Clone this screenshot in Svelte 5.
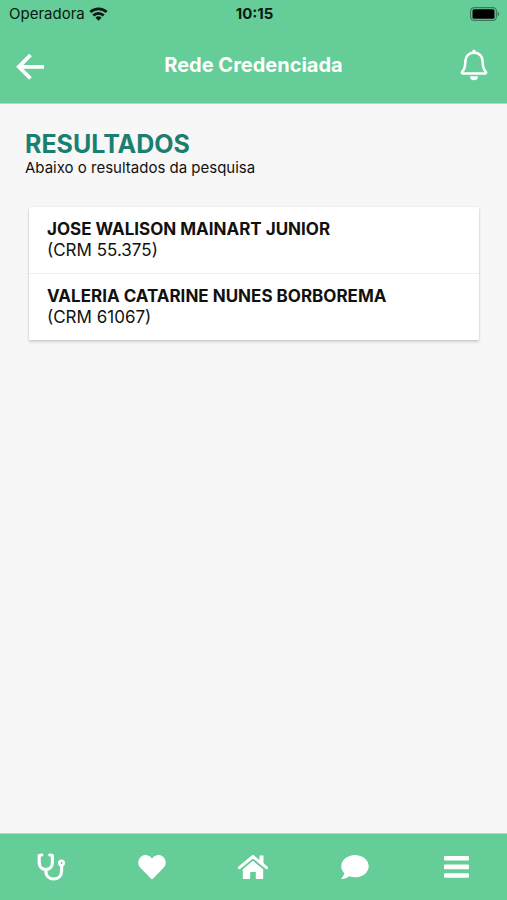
<script>
  const results = [
    { name: 'JOSE WALISON MAINART JUNIOR', crm: '55.375' },
    { name: 'VALERIA CATARINE NUNES BORBOREMA', crm: '61067' }
  ];
</script>

<div class="app">
  <header>
    <div class="status">
      <div class="carrier">
        <span>Operadora</span>
        <svg width="19" height="14" viewBox="0 0 20 14" aria-hidden="true">
          <g fill="none" stroke="#0a1a12" stroke-width="2.9">
            <path d="M1.4 5a12.3 12.3 0 0 1 17.2 0" />
            <path d="M4.5 8.500a7.800 7.800 0 0 1 11 0" />
          </g>
          <path d="M6.800 10.900a4.600 4.600 0 0 1 6.400 0L10 14z" fill="#0a1a12" />
        </svg>
      </div>
      <time>10:15</time>
      <svg class="battery" width="30" height="14" viewBox="0 0 30 14" aria-hidden="true">
        <rect x=".6" y=".6" width="25.8" height="12.8" rx="3.6" fill="none" stroke="#3c7b58" stroke-width="1.2" />
        <rect x="2.5" y="2.2" width="22" height="9.6" rx="1.6" fill="#000" />
        <path d="M27.600 4.600c2.200.8 2.200 4 0 4.800z" fill="#3c7b58" />
      </svg>
    </div>
    <div class="bar">
      <button aria-label="Voltar">
        <svg width="30" height="32" viewBox="0 0 30 32">
          <path d="M14.500 6 2.800 17.800l11.700 11.700M2.800 17.800H28" fill="none" stroke="#fff" stroke-width="3.8" />
        </svg>
      </button>
      <h1>Rede Credenciada</h1>
      <button aria-label="Notificações">
        <svg width="28" height="32" viewBox="0 0 28 32">
          <path d="M14 3.600c-5.200 0-8.700 3.700-8.700 8.800 0 6.100-1.200 8.600-3.100 10.400-.7.8-.2 1.700.7 1.700h22.200c.9 0 1.400-.9.700-1.700-1.900-1.800-3.100-4.300-3.100-10.400 0-5.100-3.500-8.800-8.700-8.800z" fill="none" stroke="#fff" stroke-width="2.600" stroke-linejoin="round" />
          <path d="M12.400 4V2a1.600 1.600 0 0 1 3.200 0v2zM10 27.200h8a4 4 0 0 1-8 0z" fill="#fff" />
        </svg>
      </button>
    </div>
  </header>

  <main>
    <h2>RESULTADOS</h2>
    <p class="intro">Abaixo o resultados da pesquisa</p>
    <ul>
      {#each results as r}
        <li>
          <strong>{r.name}</strong>
          <span>(CRM {r.crm})</span>
        </li>
      {/each}
    </ul>
  </main>

  <nav>
    <button aria-label="Médicos">
      <svg width="28" height="28" viewBox="0 0 28 28" fill="none" stroke="#fff" stroke-width="3.2" stroke-linecap="round" stroke-linejoin="round">
        <path d="M4.800 2 2.200 2.500v6.800c0 4.200 2.700 7.200 6.600 7.200s6.600-3 6.600-7.200V2.500L12.800 2" />
        <path d="M8.800 16.500v1.200c0 4.800 3.200 8.300 7.900 8.300s7.900-3.500 7.900-8.300V13" />
        <circle cx="24.500" cy="10" r="2.200" stroke-width="2.600" />
      </svg>
    </button>
    <button aria-label="Favoritos">
      <svg width="28" height="24" viewBox="0 0 512 448" fill="#fff">
        <path d="M462.300 30.600C407.500-16.100 326-7.700 275.700 44.200L256 64.500 236.300 44.200C186.100-7.700 104.500-16.100 49.700 30.600c-62.800 53.600-66.100 149.800-9.900 207.900l193.500 199.800c12.500 12.900 32.800 12.900 45.300 0l193.500-199.800c56.300-58.100 53-154.300-9.800-207.900z" />
      </svg>
    </button>
    <button aria-label="Início">
      <svg width="32" height="26" viewBox="0 0 32 26">
        <path d="M2.500 13.700 16 2.500l13.500 11.200" fill="none" stroke="#fff" stroke-width="3" stroke-linecap="round" stroke-linejoin="round" />
        <path d="M22.500 1.500h4v8.500l-4-3.400zM16 6.800 5.800 15.300V24c0 .6.400 1 1 1h6.400v-7h5.600v7h6.400c.6 0 1-.4 1-1v-8.700z" fill="#fff" />
      </svg>
    </button>
    <button aria-label="Mensagens">
      <svg width="28" height="24" viewBox="0 0 512 448" fill="#fff">
        <path d="M256 0C114.600 0 0 93.100 0 208c0 49.600 21.400 95 57 130.700C44.500 389.100 2.700 434 2.200 434.500c-2.200 2.300-2.800 5.700-1.500 8.700S4.800 448 8 448c66.300 0 116-31.800 140.600-51.400 32.700 12.300 69 19.400 107.400 19.400 141.400 0 256-93.100 256-208S397.400 0 256 0z" />
      </svg>
    </button>
    <button aria-label="Menu">
      <svg width="25" height="22" viewBox="0 0 25 22" fill="#fff">
        <rect width="25" height="4.600" rx="1" />
        <rect y="8.600" width="25" height="4.600" rx="1" />
        <rect y="17.200" width="25" height="4.600" rx="1" />
      </svg>
    </button>
  </nav>
</div>

<style>
  :global(body) {
    margin: 0;
  }
  .app {
    min-height: 100vh;
    display: flex;
    flex-direction: column;
    background: #f7f7f7;
    color: #111;
    font-family: Inter, 'Liberation Sans', sans-serif;
  }
  header {
    background: #65cd97;
    border-bottom: 1px solid #a5dfc0;
  }
  .status {
    display: grid;
    grid-template-columns: 1fr auto 1fr;
    align-items: center;
    height: 27px;
    padding: 0 7px 0 9px;
    font-size: 15px;
    color: #0a1a12;
  }
  .carrier {
    display: flex;
    align-items: center;
    gap: 4px;
  }
  time {
    font-weight: 700;
  }
  .battery {
    justify-self: end;
  }
  .bar {
    display: grid;
    grid-template-columns: 1fr auto 1fr;
    align-items: center;
    height: 76px;
    padding: 0 16px;
  }
  button {
    display: flex;
    align-items: center;
    justify-content: center;
    padding: 0;
    border: 0;
    background: none;
    cursor: pointer;
  }
  .bar button {
    width: 34px;
    justify-content: flex-start;
  }
  .bar button:last-child {
    justify-content: center;
    justify-self: end;
  }
  h1 {
    margin: 0;
    font-size: 20px;
    font-weight: 700;
    color: #fff;
  }
  main {
    flex: 1;
    padding: 25px 28px 25px 25px;
  }
  h2 {
    margin: 0;
    font-size: 25px;
    line-height: 30px;
    font-weight: 700;
    color: #1b7f70;
  }
  .intro {
    margin: 0;
    font-size: 15px;
    line-height: 18px;
  }
  ul {
    margin: 30px 0 0 4px;
    padding: 0;
    list-style: none;
    background: #fff;
    border-radius: 1px;
    box-shadow: 0 2px 3px rgba(0, 0, 0, 0.16), 0 0 2px rgba(0, 0, 0, 0.12);
  }
  li {
    padding: 12px 18px;
    font-size: 17px;
    line-height: 21px;
  }
  li + li {
    border-top: 1px solid #eee;
  }
  strong,
  li span {
    display: block;
  }
  strong {
    font-weight: 700;
  }
  nav {
    display: grid;
    grid-template-columns: repeat(5, 1fr);
    height: 66px;
    background: #65cd97;
    border-top: 1px solid #a5dfc0;
  }
</style>
